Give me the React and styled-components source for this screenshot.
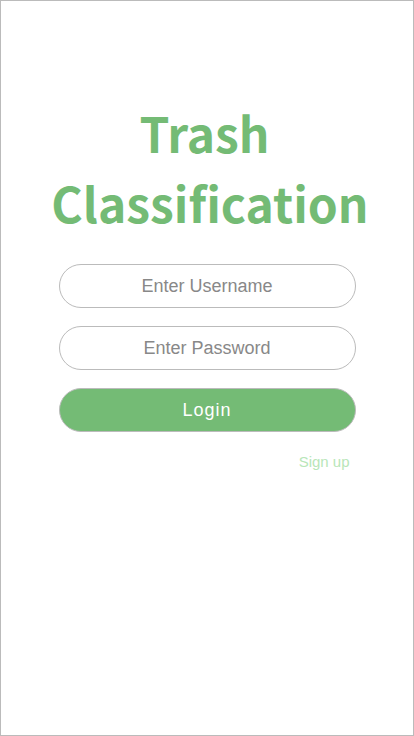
import React from "react";
import styled, { createGlobalStyle } from "styled-components";

const GlobalStyle = createGlobalStyle`
  html, body {
    margin: 0;
    padding: 0;
    background: #fff;
  }
  * {
    box-sizing: border-box;
  }
`;

const Page = styled.div`
  width: 414px;
  height: 736px;
  border: 1px solid #bbb;
  display: flex;
  flex-direction: column;
  align-items: center;
  padding-top: 96px;
`;

const Title = styled.h1`
  margin: 0 0 27px 0;
  padding-left: 6px;
  font-family: "Noto Sans CJK SC", "Noto Sans", sans-serif;
  font-weight: 700;
  font-size: 48px;
  line-height: 70px;
  color: #74bb75;
  text-align: center;
`;

const Form = styled.form`
  width: 297px;
  display: flex;
  flex-direction: column;
  gap: 18px;
`;

const Input = styled.input`
  height: 44px;
  width: 100%;
  border: 1px solid #bbb;
  border-radius: 22px;
  background: #fff;
  outline: none;
  text-align: center;
  font-family: "Liberation Sans", Arial, sans-serif;
  font-size: 18px;
  color: #555;
  &::placeholder {
    color: #888;
  }
`;

const Button = styled.button`
  height: 44px;
  width: 100%;
  border: 1px solid #bbb;
  border-radius: 22px;
  background: #74bb75;
  color: #fff;
  font-family: "Liberation Sans", Arial, sans-serif;
  font-size: 18px;
  letter-spacing: 1px;
  cursor: pointer;
`;

const SignUp = styled.a`
  align-self: flex-end;
  margin: 3px 6px 0 0;
  font-family: "Liberation Sans", Arial, sans-serif;
  font-size: 15px;
  color: #b8e6b8;
  text-decoration: none;
  cursor: pointer;
`;

export default function App() {
  return (
    <>
      <GlobalStyle />
      <Page>
        <Title>
          Trash{"\u00a0"}
          <br />
          Classification
        </Title>
        <Form onSubmit={(e) => e.preventDefault()}>
          <Input type="text" placeholder="Enter Username" />
          <Input type="password" placeholder="Enter Password" />
          <Button type="submit">Login</Button>
          <SignUp>Sign up</SignUp>
        </Form>
      </Page>
    </>
  );
}
